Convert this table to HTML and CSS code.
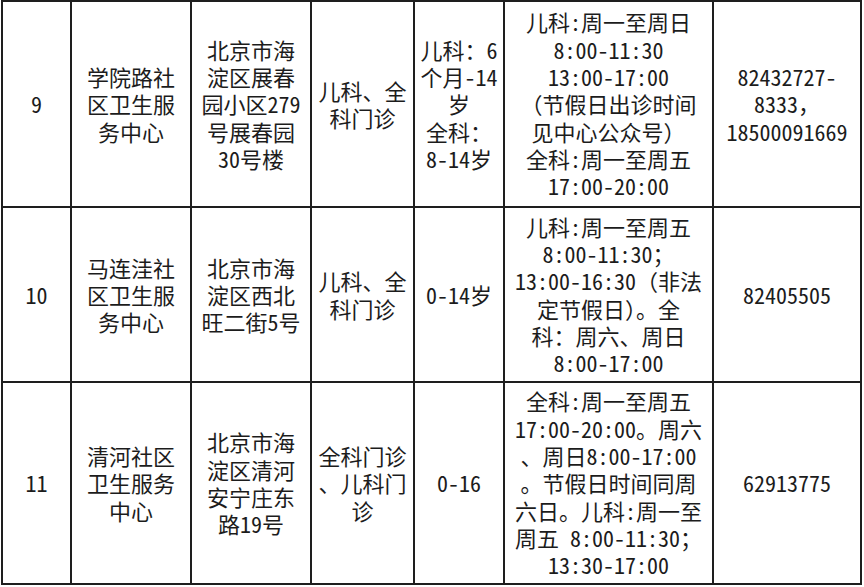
FILE: index.html
```html
<!DOCTYPE html>
<html lang="zh-CN">
<head>
<meta charset="utf-8">
<title>社区卫生服务中心</title>
<link rel="stylesheet" href="styles.css">
</head>
<body>
<table class="clinics">
  <colgroup>
    <col class="c-no">
    <col class="c-name">
    <col class="c-addr">
    <col class="c-dept">
    <col class="c-age">
    <col class="c-time">
    <col class="c-tel">
  </colgroup>
  <tbody>
    <tr class="r1">
      <td>9</td>
      <td>学院路社<br>区卫生服<br>务中心</td>
      <td>北京市海<br>淀区展春<br>园小区279<br>号展春园<br>30号楼</td>
      <td>儿科、全<br>科门诊</td>
      <td>儿科：6<br>个月-14<br>岁<br>全科：<br>8-14岁</td>
      <td>儿科:周一至周日<br>8:00-11:30<br>13:00-17:00<br>（节假日出诊时间<br>见中心公众号）<br>全科:周一至周五<br>17:00-20:00</td>
      <td>82432727-<br>8333，<br>18500091669</td>
    </tr>
    <tr class="r2">
      <td>10</td>
      <td>马连洼社<br>区卫生服<br>务中心</td>
      <td>北京市海<br>淀区西北<br>旺二街5号</td>
      <td>儿科、全<br>科门诊</td>
      <td>0-14岁</td>
      <td>儿科:周一至周五<br>8:00-11:30；<br>13:00-16:30（非法<br>定节假日）。全<br>科：周六、周日<br>8:00-17:00</td>
      <td>82405505</td>
    </tr>
    <tr class="r3">
      <td>11</td>
      <td>清河社区<br>卫生服务<br>中心</td>
      <td>北京市海<br>淀区清河<br>安宁庄东<br>路19号</td>
      <td>全科门诊<br>、儿科门<br>诊</td>
      <td>0-16</td>
      <td>全科:周一至周五<br>17:00-20:00。周六<br>、周日8:00-17:00<br>。节假日时间同周<br>六日。儿科:周一至<br>周五 8:00-11:30；<br>13:30-17:00</td>
      <td>62913775</td>
    </tr>
  </tbody>
</table>
</body>
</html>
```

FILE: styles.css
```css
html, body {
  margin: 0;
  padding: 0;
  background: #ffffff;
}

body {
  padding-left: 1px;
}

.clinics {
  border-collapse: collapse;
  table-layout: fixed;
  width: 861px;
  font-family: "Noto Sans Mono CJK SC", "Noto Sans CJK SC", sans-serif;
  font-size: 22px;
  line-height: 27.3px;
  color: #1c1c1c;
}

.clinics td {
  border: 2px solid #1e1e1e;
  padding: 0;
  text-align: center;
  vertical-align: middle;
  white-space: nowrap;
  overflow: hidden;
}

.c-no { width: 69px; }
.c-name { width: 120px; }
.c-addr { width: 120px; }
.c-dept { width: 103px; }
.c-age { width: 90px; }
.c-time { width: 209px; }
.c-tel { width: 148px; }

.r1 { height: 206px; }
.r2 { height: 175px; }
.r3 { height: 202px; }
```
